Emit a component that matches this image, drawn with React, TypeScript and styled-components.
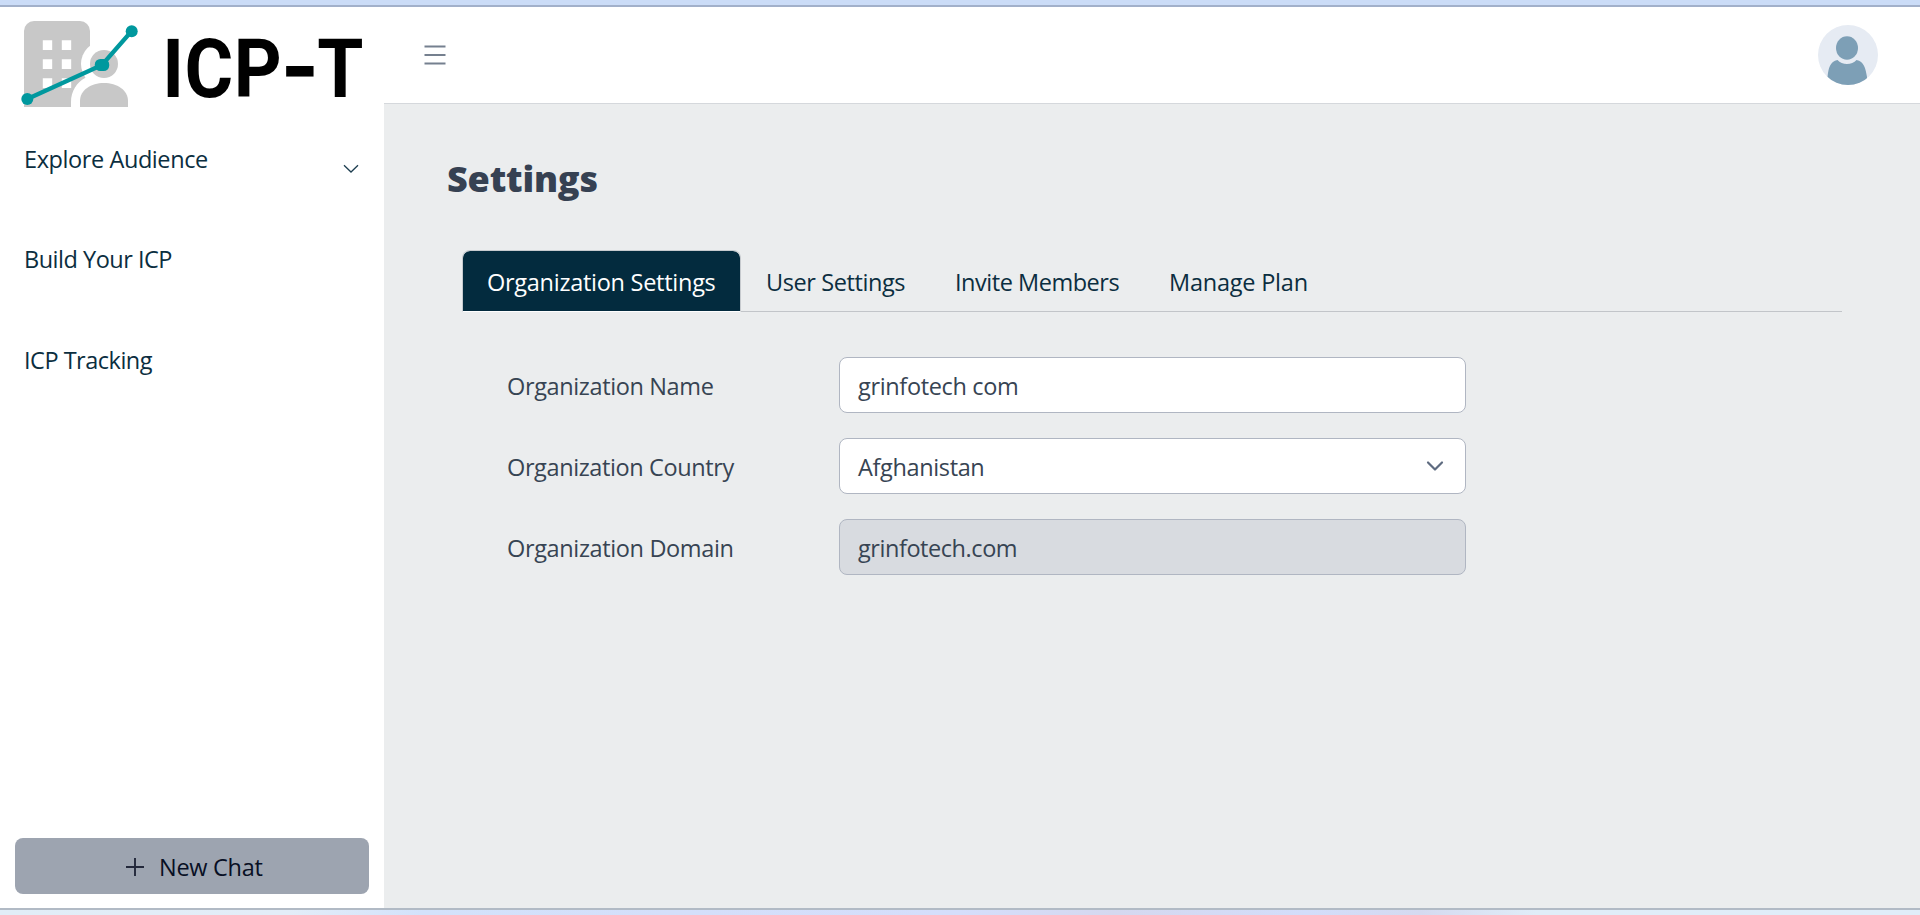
import React from "react";
import styled, { createGlobalStyle } from "styled-components";

const GlobalStyle = createGlobalStyle`
  *, *::before, *::after { box-sizing: border-box; }
  body {
    margin: 0;
    font: 400 23.5px/36px "Open Sans", "Noto Sans", sans-serif;
    color: #374453;
    background: #fff;
  }
`;

const Page = styled.div`
  display: flex;
  flex-direction: column;
  height: 915px;
  overflow: hidden;
`;

const TopEdge = styled.div`
  flex: none;
  height: 7px;
  background: #cbdcf7;
  border-bottom: 2px solid #a2b0ca;
`;

const BottomEdge = styled.div`
  flex: none;
  height: 7px;
  border-top: 2px solid #b1bac5;
  background: linear-gradient(90deg, #e1edf7 0%, #e3edf8 15%, #d3e2fb 22%, #d4dffa 35%, #d5defb 50%, #d5d8ef 58%, #d3ddfa 68%, #d5daf0 74%, #e0edf8 80%, #e0edf9 100%);
`;

const Shell = styled.div`
  flex: 1;
  display: flex;
  min-height: 0;
`;

const Sidebar = styled.aside`
  width: 384px;
  display: flex;
  flex-direction: column;
  padding: 0 15px 14px;
  background: #fff;
`;

const LogoLink = styled.a`
  display: block;
  height: 113px;
  margin: 0 -15px;
`;

const Label = styled.span<{ $tracking: number }>`
  letter-spacing: ${(p) => p.$tracking}px;
  white-space: nowrap;
`;

const Menu = styled.nav`
  flex: 1;
  display: flex;
  flex-direction: column;
  gap: 28px;
`;

const MenuItem = styled.a`
  display: flex;
  align-items: flex-start;
  justify-content: space-between;
  height: 72.3px;
  padding: 21px 10px 0 9px;
  color: #0b2e40;

  svg { margin-top: 23px; }
`;

const NewChatButton = styled.button`
  display: flex;
  align-items: center;
  justify-content: center;
  gap: 15.500px;
  width: 354px;
  height: 56px;
  padding: 1px 0 0 4px;
  border: 0;
  border-radius: 8px;
  background: #9da4b0;
  color: #080f24;
  font: inherit;
`;

const Main = styled.div`
  flex: 1;
  display: flex;
  flex-direction: column;
`;

const Header = styled.header`
  display: flex;
  align-items: center;
  justify-content: space-between;
  height: 97px;
  padding: 0 42px 0 40px;
  background: #fff;
  border-bottom: 1px solid #d5d8dc;
`;

const Content = styled.main`
  flex: 1;
  padding: 51px 78px 0 63px;
  background: #ebedee;
`;

const Title = styled.h1`
  margin: 0;
  font-size: 36px;
  font-weight: 800;
  line-height: 48px;
  letter-spacing: -0.19px;
  color: #364152;
`;

const Tabs = styled.div`
  display: flex;
  height: 62px;
  margin: 47px 0 0 15px;
  border-bottom: 1px solid #c2c5c9;
`;

const Tab = styled.button<{ $active?: boolean; $width: number }>`
  width: ${(p) => p.$width}px;
  height: 62px;
  padding: 2px 0 0 24px;
  border: 1px solid ${(p) => (p.$active ? "#c6cace" : "transparent")};
  border-bottom-color: ${(p) => (p.$active ? "#fff" : "transparent")};
  border-radius: 8px 8px 0 0;
  background: ${(p) => (p.$active ? "#032b3e" : "transparent")};
  background-clip: padding-box;
  color: ${(p) => (p.$active ? "#fff" : "#0b2e40")};
  font: inherit;
  text-align: left;
`;

const Form = styled.form`
  display: flex;
  flex-direction: column;
  gap: 25px;
  padding: 45px 0 0 60px;
`;

const Field = styled.label`
  display: grid;
  grid-template-columns: 332px 627px;
  align-items: center;
  height: 56px;

  > span { padding-top: 2px; }
`;

const Control = styled.div<{ $disabled?: boolean }>`
  display: flex;
  align-items: center;
  justify-content: space-between;
  height: 56px;
  padding: 0 21px 0 18px;
  border: 1px solid #b0b6c2;
  border-radius: 8px;
  background: ${(p) => (p.$disabled ? "#d8dbe0" : "#fff")};

  > span { padding-top: 2px; }
`;

const Logo = () => (
  <svg width="384" height="113" viewBox="0 7 384 113">
    <path fill="#c8c8c8" fillRule="evenodd" d="M34 21H80a10 10 0 0 1 10 10V107H24V31a10 10 0 0 1 10-10ZM42.800 40.300v9.700h9.400v-9.700ZM61.800 40.300v9.700h9.400v-9.700ZM42.800 59.300v9.700h9.400v-9.700ZM61.800 59.300v9.700h9.400v-9.700ZM42.800 78.300v9.700h9.400v-9.700ZM61.800 78.300v9.700h9.400v-9.700Z" />
    <circle cx="104" cy="64" r="23" fill="#fff" />
    <path fill="#fff" d="M71 108V102C71 91 77 82 85 78L92 72L137 90V108Z" />
    <circle cx="104" cy="64" r="14" fill="#c8c8c8" />
    <path fill="#c8c8c8" d="M80 107V101C80 90 91 83 104 83s24 7 24 18v6Z" />
    <path d="M27.300 99 102 65 131.700 31" fill="none" stroke="#00989e" strokeWidth="4.200" />
    <circle cx="27.3" cy="99" r="6" fill="#00989e" />
    <circle cx="131.7" cy="31.2" r="6" fill="#00989e" />
    <rect x="94.8" y="59" width="14.4" height="12" rx="5.5" fill="#00989e" />
    <text transform="scale(.92 1)" y="97" fill="#000" fontFamily="Roboto, sans-serif" fontWeight="700" fontSize="81">
      <tspan x="176.5 200.6 254.2">ICP</tspan>
      <tspan x="304.8" dy="1" fontFamily="Inter, sans-serif" fontSize="90">-</tspan>
      <tspan x="344.8" dy="-1">T</tspan>
    </text>
  </svg>
);

const ChevronThin = () => (
  <svg width="16" height="10" viewBox="0 0 16 10">
    <path d="m1 1.3 7 6.7 7-6.7" fill="none" stroke="#1d3e50" strokeWidth="1.3" />
  </svg>
);

const Chevron = () => (
  <svg width="18" height="12" viewBox="0 0 18 12">
    <path d="m2 2.500 7 7 7-7" fill="none" stroke="#5e6b80" strokeWidth="2.200" strokeLinecap="round" strokeLinejoin="round" />
  </svg>
);

const Plus = () => (
  <svg width="18" height="18" viewBox="0 0 18 18">
    <path d="M9 0v18M0 9h18" stroke="#23283b" strokeWidth="1.9" />
  </svg>
);

const Hamburger = () => (
  <svg width="22" height="22" viewBox="0 0 22 22">
    <path d="M.5 2.5h21M.5 11h21M.5 19.5h21" stroke="#75808f" strokeWidth="1.9" />
  </svg>
);

const Avatar = () => (
  <svg width="60" height="60" viewBox="0 0 60 60">
    <defs>
      <clipPath id="avatar-round"><circle cx="30" cy="30" r="30" /></clipPath>
    </defs>
    <g clipPath="url(#avatar-round)">
      <rect width="60" height="60" fill="#e6ebf3" />
      <ellipse cx="29" cy="23" rx="11" ry="11.8" fill="#7d9fb6" />
      <path fill="#7d9fb6" d="M9.500 60V52C10.500 43 12 36.500 19.500 35C24 40.200 34 40.200 38.500 35C46 36.500 47.500 43 49 52V60Z" />
    </g>
  </svg>
);

const menu = [
  { text: "Explore Audience", tracking: -0.41, expandable: true },
  { text: "Build Your ICP", tracking: -0.49 },
  { text: "ICP Tracking", tracking: -0.49 },
];

const tabs = [
  { text: "Organization Settings", tracking: -0.27, width: 279, active: true },
  { text: "User Settings", tracking: -0.4, width: 189 },
  { text: "Invite Members", tracking: -0.47, width: 214 },
  { text: "Manage Plan", tracking: -0.22, width: 190 },
];

const fields = [
  { text: "Organization Name", tracking: -0.37, value: "grinfotech com", valueTracking: -0.34 },
  { text: "Organization Country", tracking: -0.39, value: "Afghanistan", valueTracking: -0.36, select: true },
  { text: "Organization Domain", tracking: -0.36, value: "grinfotech.com", valueTracking: -0.44, disabled: true },
];

export default function App() {
  return (
    <Page>
      <GlobalStyle />
      <TopEdge />
      <Shell>
        <Sidebar>
          <LogoLink><Logo /></LogoLink>
          <Menu>
            {menu.map((m) => (
              <MenuItem key={m.text}>
                <Label $tracking={m.tracking}>{m.text}</Label>
                {m.expandable && <ChevronThin />}
              </MenuItem>
            ))}
          </Menu>
          <NewChatButton type="button">
            <Plus />
            <Label $tracking={-0.3}>New Chat</Label>
          </NewChatButton>
        </Sidebar>
        <Main>
          <Header>
            <Hamburger />
            <Avatar />
          </Header>
          <Content>
            <Title>Settings</Title>
            <Tabs>
              {tabs.map((t) => (
                <Tab key={t.text} type="button" $active={t.active} $width={t.width}>
                  <Label $tracking={t.tracking}>{t.text}</Label>
                </Tab>
              ))}
            </Tabs>
            <Form>
              {fields.map((f) => (
                <Field key={f.text}>
                  <Label $tracking={f.tracking}>{f.text}</Label>
                  <Control $disabled={f.disabled}>
                    <Label $tracking={f.valueTracking}>{f.value}</Label>
                    {f.select && <Chevron />}
                  </Control>
                </Field>
              ))}
            </Form>
          </Content>
        </Main>
      </Shell>
      <BottomEdge />
    </Page>
  );
}
